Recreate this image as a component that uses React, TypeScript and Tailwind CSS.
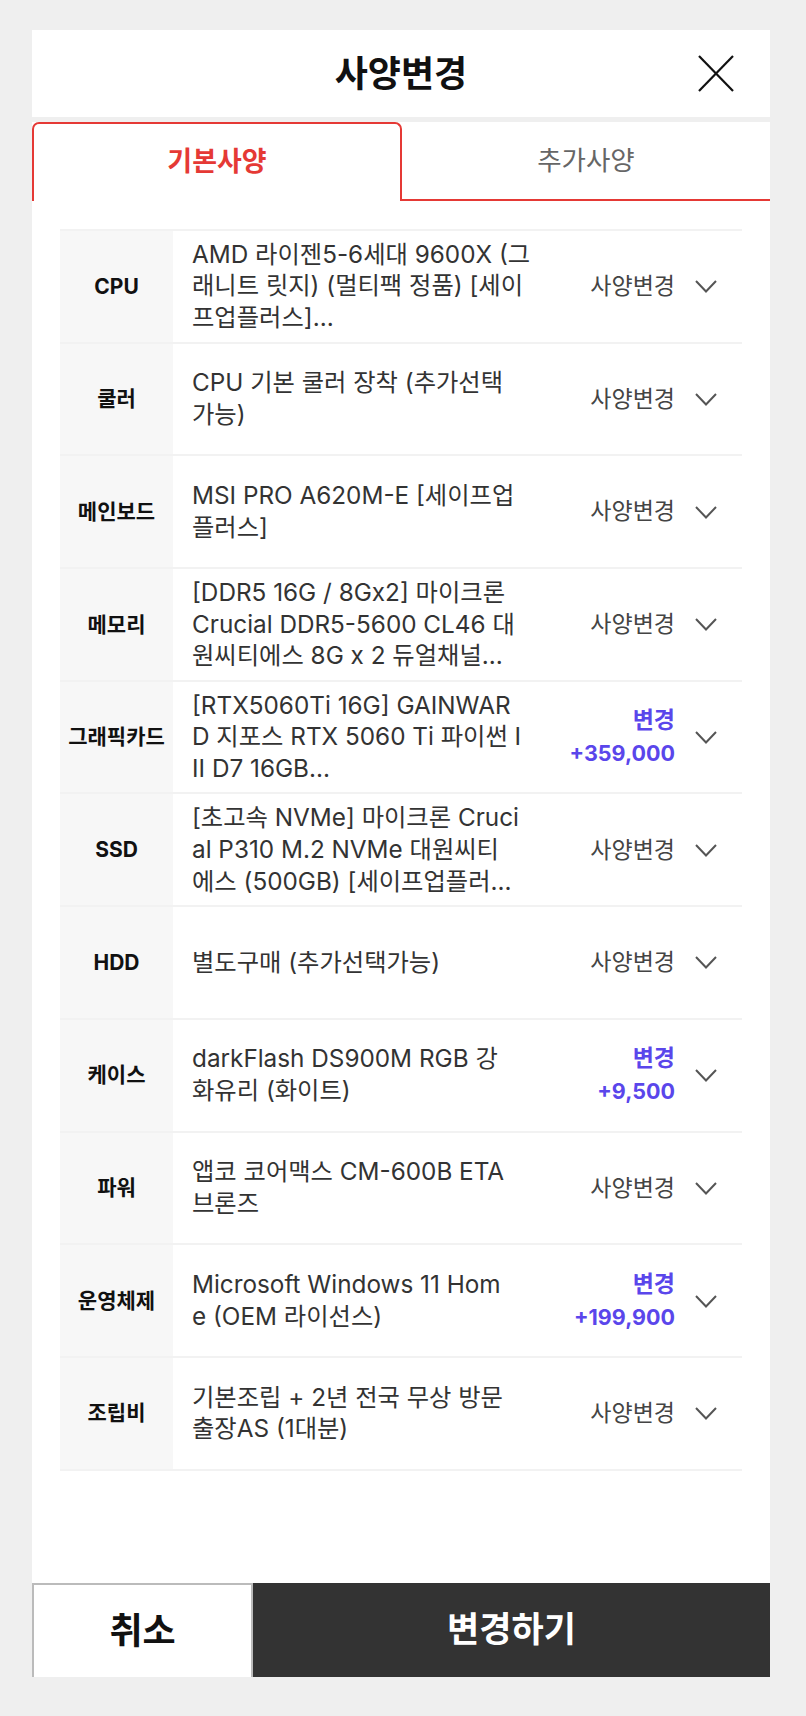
import React from 'react';

type Part = {
  label: string;
  lines: string[];
  price?: string;
};

const parts: Part[] = [
  { label: 'CPU', lines: ['AMD 라이젠5-6세대 9600X (그', '래니트 릿지) (멀티팩 정품) [세이', '프업플러스]…'] },
  { label: '쿨러', lines: ['CPU 기본 쿨러 장착 (추가선택', '가능)'] },
  { label: '메인보드', lines: ['MSI PRO A620M-E [세이프업', '플러스]'] },
  { label: '메모리', lines: ['[DDR5 16G / 8Gx2] 마이크론', 'Crucial DDR5-5600 CL46 대', '원씨티에스 8G x 2 듀얼채널…'] },
  { label: '그래픽카드', lines: ['[RTX5060Ti 16G] GAINWAR', 'D 지포스 RTX 5060 Ti 파이썬 I', 'II D7 16GB…'], price: '+359,000' },
  { label: 'SSD', lines: ['[초고속 NVMe] 마이크론 Cruci', 'al P310 M.2 NVMe 대원씨티', '에스 (500GB) [세이프업플러…'] },
  { label: 'HDD', lines: ['별도구매 (추가선택가능)'] },
  { label: '케이스', lines: ['darkFlash DS900M RGB 강', '화유리 (화이트)'], price: '+9,500' },
  { label: '파워', lines: ['앱코 코어맥스 CM-600B ETA', '브론즈'] },
  { label: '운영체제', lines: ['Microsoft Windows 11 Hom', 'e (OEM 라이선스)'], price: '+199,900' },
  { label: '조립비', lines: ['기본조립 + 2년 전국 무상 방문', '출장AS (1대분)'] },
];

function Chevron() {
  return (
    <svg width="22" height="13" viewBox="0 0 22 13" fill="none" className="shrink-0">
      <polyline points="1,1 11,11.5 21,1" stroke="#555" strokeWidth="2" strokeLinejoin="miter" />
    </svg>
  );
}

function PartRow({ part }: { part: Part }) {
  return (
    <div className="flex h-[112.7px] border-t-2 border-[#f2f2f2]">
      <div className="w-[113px] shrink-0 bg-[#f7f7f7] flex items-center justify-center text-[21px] font-bold text-[#111]">
        {part.label}
      </div>
      <div className="flex-1 flex flex-col justify-center pl-[19px] text-[24.3px] leading-[31.7px] text-[#333] whitespace-nowrap">
        {part.lines.map((l, i) => (
          <div key={i}>{l}</div>
        ))}
      </div>
      <div className="flex items-center pr-[25px]">
        {part.price ? (
          <div className="flex flex-col items-end text-[21.5px] font-bold leading-[33px] text-[#5a46eb]">
            <span className="text-[23px]">변경</span>
            <span>{part.price}</span>
          </div>
        ) : (
          <span className="text-[23px] text-[#444]">사양변경</span>
        )}
        <div className="ml-[20px] mt-[1px]">
          <Chevron />
        </div>
      </div>
    </div>
  );
}

export default function App() {
  return (
    <div
      className="min-h-[1716px] bg-[#efefef] pt-[30px]"
      style={{ fontFamily: 'Inter, "Noto Sans CJK KR", sans-serif' }}
    >
      <div className="ml-[32px] w-[738px] bg-white">
        {/* header */}
        <div className="relative h-[87px] flex items-center justify-center">
          <h2 className="text-[36px] font-bold text-[#111]">사양변경</h2>
          <button className="absolute right-[36px] top-[25px]">
            <svg width="36" height="37" viewBox="0 0 36 37" fill="none">
              <line x1="1" y1="1" x2="35" y2="36" stroke="#111" strokeWidth="2.2" />
              <line x1="35" y1="1" x2="1" y2="36" stroke="#111" strokeWidth="2.2" />
            </svg>
          </button>
        </div>
        <div className="h-[5px] bg-[#efefef]" />

        {/* tabs */}
        <div className="flex h-[79px]">
          <div className="w-[370px] flex items-center justify-center border-2 border-b-0 border-[#e53935] rounded-t-[7px] text-[27px] font-bold text-[#e53935]">
            기본사양
          </div>
          <div className="flex-1 flex items-center justify-center border-b-2 border-[#e53935] text-[26.5px] text-[#666]">
            추가사양
          </div>
        </div>

        {/* parts table */}
        <div className="px-[28px] pt-[28px] pb-[112px]">
          <div className="border-b-2 border-[#f2f2f2]">
            {parts.map((p) => (
              <PartRow key={p.label} part={p} />
            ))}
          </div>
        </div>

        {/* buttons */}
        <div className="flex h-[94px]">
          <button className="w-[221px] border-t-2 border-l-2 border-r-2 border-[#bbb] bg-white text-[36px] font-bold text-[#111]">
            취소
          </button>
          <button className="flex-1 bg-[#333] text-[35px] font-bold text-white">변경하기</button>
        </div>
      </div>
    </div>
  );
}
